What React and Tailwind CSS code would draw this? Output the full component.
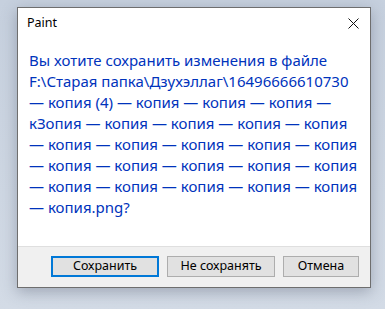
import React from "react";

const lines = [
  "Вы хотите сохранить изменения в файле",
  "F:\\Старая папка\\Дзухэллаг\\16496666610730",
  "— копия (4) — копия — копия — копия —",
  "кЗопия — копия — копия — копия — копия",
  "— копия — копия — копия — копия — копия",
  "— копия — копия — копия — копия — копия",
  "— копия — копия — копия — копия — копия",
  "— копия.png?",
];

const App = () => {
  return (
    <div className="w-[385px] h-[309px] bg-gradient-to-b from-[#c6d0de] to-[#d3dbe6] pl-[17px] pt-[7px] font-['Noto_Sans',sans-serif]">
      <div className="w-[354px] h-[281px] border border-[#6e6e6e] bg-white flex flex-col shadow-[0_4px_14px_rgba(60,70,90,0.35)]">
        {/* title bar */}
        <div className="h-[30px] flex items-center justify-between pl-[9px] pr-[9px]">
          <span className="text-[12.5px] text-black">Paint</span>
          <svg width="11" height="11" viewBox="0 0 11 11" className="mr-[2px]">
            <path d="M0.5 0.5 L10.5 10.5 M10.5 0.5 L0.5 10.5" stroke="#111" strokeWidth="1" />
          </svg>
        </div>

        {/* message */}
        <div className="flex-1 pt-[12px] pl-[11px] text-[15px] leading-[21px] text-[#0033bc]">
          {lines.map((l, i) => (
            <div key={i} className="whitespace-nowrap">
              {l}
            </div>
          ))}
        </div>

        {/* buttons */}
        <div className="h-[41px] border-t border-[#dfdfdf] bg-[#f0f0f0] flex items-start justify-end gap-[8px] pt-[9px] pr-[11px]">
          <button className="w-[108px] h-[21px] border-2 border-[#0078d7] bg-[#e1e1e1] text-[12.5px] text-black leading-none">
            Сохранить
          </button>
          <button className="w-[108px] h-[21px] border border-[#adadad] bg-[#e1e1e1] text-[12.5px] text-black leading-none">
            Не сохранять
          </button>
          <button className="w-[76px] h-[21px] border border-[#adadad] bg-[#e1e1e1] text-[12.5px] text-black leading-none">
            Отмена
          </button>
        </div>
      </div>
    </div>
  );
};

export default App;
